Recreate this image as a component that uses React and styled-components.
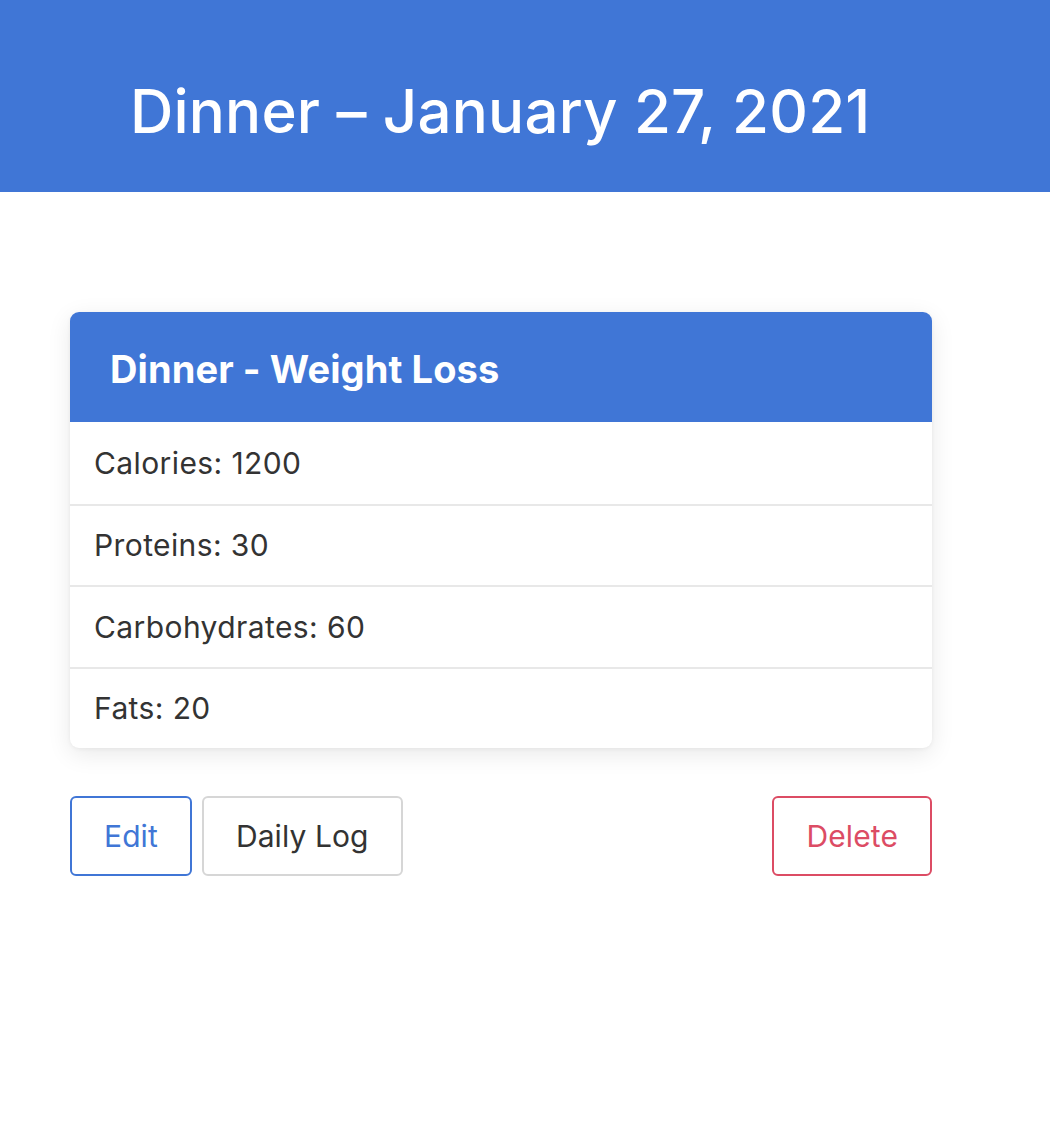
import React from "react";
import styled, { createGlobalStyle } from "styled-components";

const Global = createGlobalStyle`
  html, body { margin: 0; padding: 0; background: #fff; }
  body { font-family: Inter, "Noto Sans", "Liberation Sans", sans-serif; color: #333; }
  * { box-sizing: border-box; }
`;

const Banner = styled.header`
  background: #4076d6;
  height: 192px;
  display: flex;
  align-items: center;
  padding: 0 0 0 130px;
`;

const Title = styled.h1`
  margin: 0;
  padding-top: 30px;
  font-size: 60px;
  font-weight: 500;
  color: #fff;
  letter-spacing: 0.2px;
`;

const Main = styled.main`
  padding: 120px 0 0 70px;
  width: 932px;
`;

const Card = styled.section`
  border-radius: 9px;
  overflow: hidden;
  background: #fff;
  box-shadow: 0 6px 24px rgba(0, 0, 0, 0.09), 0 1px 4px rgba(0, 0, 0, 0.05);
`;

const CardHeader = styled.h2`
  margin: 0;
  height: 110px;
  display: flex;
  align-items: center;
  padding: 4px 40px 0;
  background: #4076d6;
  color: #fff;
  font-size: 38px;
  font-weight: 700;
  letter-spacing: 0.1px;
`;

const Row = styled.div`
  height: 81.5px;
  display: flex;
  align-items: center;
  padding: 0 24px;
  font-size: 30px;
  letter-spacing: 0.4px;
  color: #333;
  border-top: ${(p) => (p.$first ? "none" : "2px solid #e8e8e8")};
`;

const Actions = styled.div`
  display: flex;
  gap: 10px;
  margin-top: 48px;
`;

const Button = styled.button`
  height: 80px;
  padding: 0 32px;
  border-radius: 6px;
  background: #fff;
  font-family: inherit;
  font-size: 30px;
  letter-spacing: 0.1px;
  border: 2px solid ${(p) => p.$border};
  color: ${(p) => p.$color};
  margin-left: ${(p) => (p.$push ? "auto" : "0")};
`;

const rows = ["Calories: 1200", "Proteins: 30", "Carbohydrates: 60", "Fats: 20"];

export default function App() {
  return (
    <>
      <Global />
      <Banner>
        <Title>Dinner – January 27, 2021</Title>
      </Banner>
      <Main>
        <Card>
          <CardHeader>Dinner - Weight Loss</CardHeader>
          {rows.map((r, i) => (
            <Row key={r} $first={i === 0}>{r}</Row>
          ))}
        </Card>
        <Actions>
          <Button $border="#4076d6" $color="#4076d6">Edit</Button>
          <Button $border="#d6d6d6" $color="#333">Daily Log</Button>
          <Button $border="#dc4c64" $color="#dc4c64" $push>Delete</Button>
        </Actions>
      </Main>
    </>
  );
}
